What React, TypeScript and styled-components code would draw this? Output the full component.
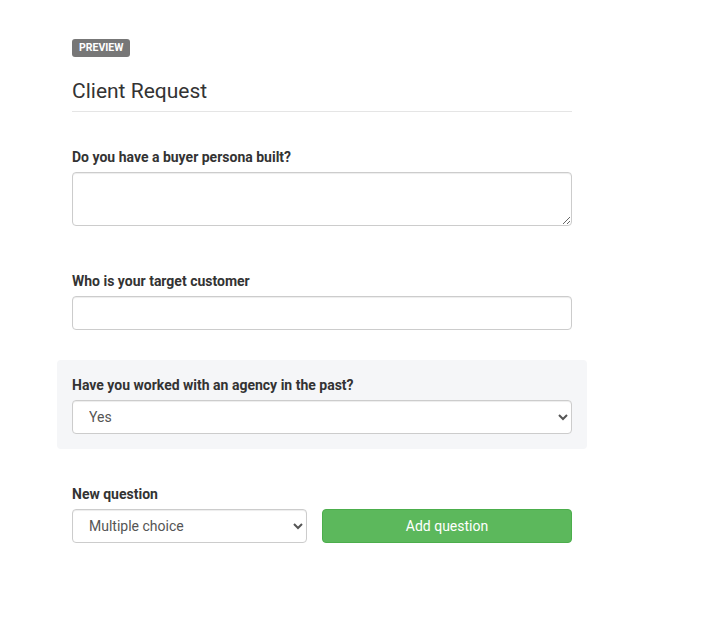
import React from "react";
import styled, { createGlobalStyle } from "styled-components";

const Global = createGlobalStyle`
  html, body { margin: 0; padding: 0; background: #fff; }
  body {
    font-family: Roboto, "Liberation Sans", Arial, sans-serif;
    font-size: 14px;
    line-height: 1.42857;
    color: #333;
  }
  * { box-sizing: border-box; }
`;

const Page = styled.div`
  width: 500px;
  margin-left: 72px;
  padding-top: 39px;
`;

const Badge = styled.div`
  width: fit-content;
  background: #777;
  color: #fff;
  font-size: 10.5px;
  font-weight: 700;
  line-height: 18px;
  height: 18px;
  padding: 0 7px;
  border-radius: 3px;
`;

const Title = styled.h3`
  margin: 23px 0 20px;
  font-size: 21px;
  font-weight: 400;
  line-height: 22px;
  color: #333;
  padding-bottom: 9px;
  border-bottom: 1px solid #e5e5e5;
`;

const Item = styled.div<{ $active?: boolean }>`
  margin: 0 -15px 15px;
  padding: 15px;
  border-radius: 4px;
  background: ${(p) => (p.$active ? "#f5f6f8" : "transparent")};
`;

const Label = styled.label`
  display: block;
  font-weight: 700;
  font-size: 14px;
  line-height: 20px;
  margin-bottom: 5px;
  color: #333;
`;

const controlBase = `
  display: block;
  width: 100%;
  border: 1px solid #ccc;
  border-radius: 4px;
  background: #fff;
  font-family: Roboto, "Liberation Sans", Arial, sans-serif;
  font-size: 14px;
  color: #555;
  padding: 6px 12px;
  margin: 0;
  box-shadow: inset 0 1px 1px rgba(0,0,0,0.075);
`;

const TextArea = styled.textarea`
  ${controlBase}
  height: 54px;
  vertical-align: top;
`;

const Input = styled.input`
  ${controlBase}
  height: 34px;
`;

const Select = styled.select`
  ${controlBase}
  height: 34px;
`;

const NewSection = styled.div`
  padding-top: 20px;
`;

const NewRow = styled.div`
  display: grid;
  grid-template-columns: 235px 250px;
  column-gap: 15px;
`;

const AddButton = styled.button`
  height: 34px;
  border: 1px solid #4cae4c;
  border-radius: 4px;
  background: #5cb85c;
  color: #fff;
  font-family: Roboto, "Liberation Sans", Arial, sans-serif;
  font-size: 14px;
  cursor: pointer;
`;

export default function App() {
  return (
    <>
      <Global />
      <Page>
        <Badge>PREVIEW</Badge>
        <Title>Client Request</Title>
        <Item>
          <Label>Do you have a buyer persona built?</Label>
          <TextArea />
        </Item>
        <Item>
          <Label>Who is your target customer</Label>
          <Input type="text" />
        </Item>
        <Item $active>
          <Label>Have you worked with an agency in the past?</Label>
          <Select defaultValue="Yes">
            <option>Yes</option>
            <option>No</option>
          </Select>
        </Item>
        <NewSection>
          <Label>New question</Label>
          <NewRow>
            <Select defaultValue="Multiple choice">
              <option>Multiple choice</option>
              <option>Text</option>
              <option>Paragraph</option>
            </Select>
            <AddButton type="button">Add question</AddButton>
          </NewRow>
        </NewSection>
      </Page>
    </>
  );
}
